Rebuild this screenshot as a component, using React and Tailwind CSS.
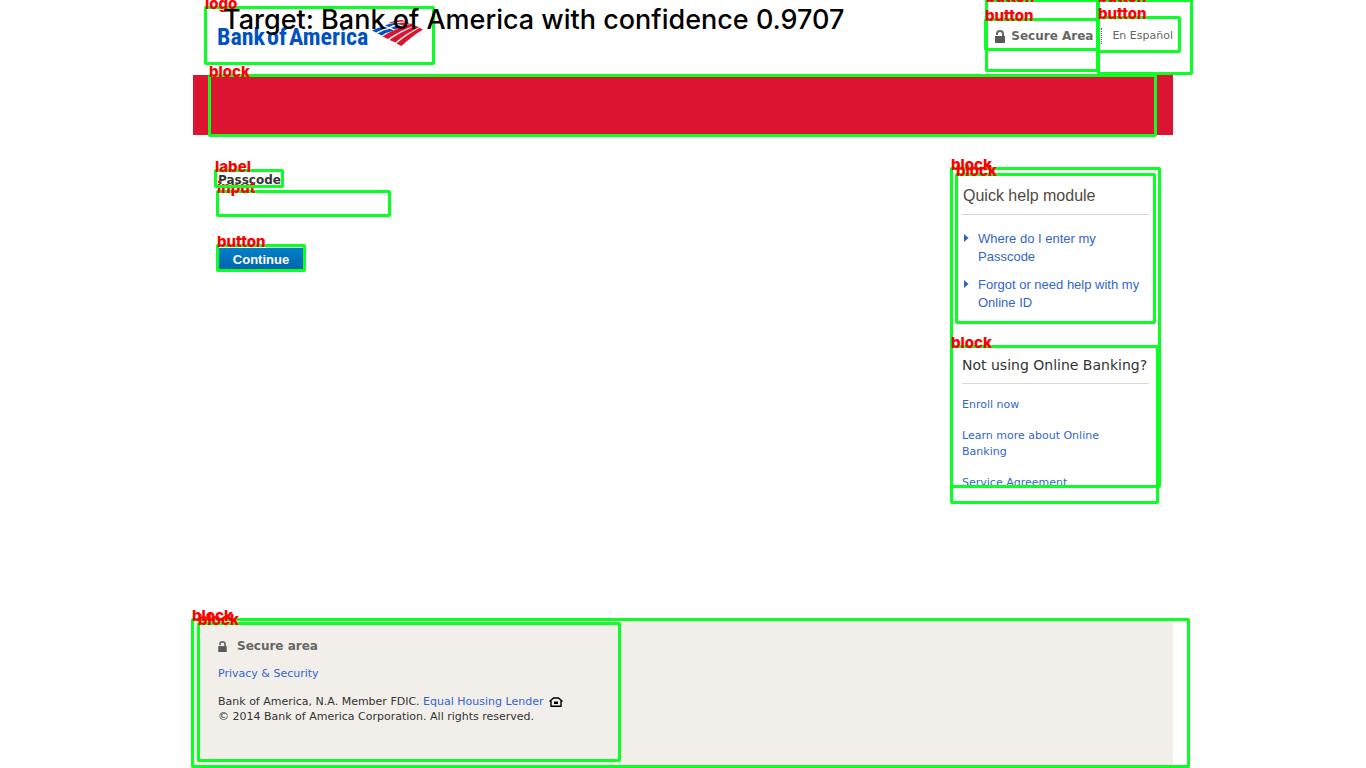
const verdana = "font-['DejaVu_Sans',sans-serif]";
const arial = "font-['Liberation_Sans',sans-serif]";

const marks = [
  { text: 'logo', box: 'left-[11px] top-[6px] w-[231px] h-[59px]' },
  { text: 'block', box: 'left-[15px] top-[74px] w-[949px] h-[63px]' },
  { text: 'button', box: 'left-[792px] top-[-1px] w-[114px] h-[73px]' },
  { text: 'button', box: 'left-[904px] top-[-1px] w-[96px] h-[76px]' },
  { text: 'button', box: 'left-[791px] top-[18px] w-[115px] h-[33px]' },
  { text: 'button', box: 'left-[904px] top-[16px] w-[84px] h-[37px]' },
  { text: 'input', box: 'left-[23px] top-[190px] w-[175px] h-[27px]' },
  { text: 'label', box: 'left-[21px] top-[169px] w-[70px] h-[19px]' },
  { text: 'button', box: 'left-[23px] top-[244px] w-[90px] h-[28px]' },
  { text: 'block', box: 'left-[757px] top-[167px] w-[211px] h-[321px]' },
  { text: 'block', box: 'left-[762px] top-[173px] w-[201px] h-[151px]' },
  { text: 'block', box: 'left-[757px] top-[345px] w-[209px] h-[159px]' },
  { text: 'block', box: 'left-[-2px] top-[618px] w-[999px] h-[150px]' },
  { text: 'block', box: 'left-[4px] top-[622px] w-[424px] h-[140px]' },
];

function Mark({ text, box }) {
  return (
    <div className={`absolute rounded-[2px] border-3 border-[#0cff25] ${box}`}>
      <span className="absolute bottom-full left-[-2px] h-[11px] font-['Inter',sans-serif] text-[15px] leading-[11px] font-extrabold text-[#ff0000]">
        {text}
      </span>
    </div>
  );
}

function Lock({ className }) {
  return (
    <svg className={className} viewBox="0 0 10 13" aria-hidden="true">
      <path d="M2 5V3.6C2 1.900 3.200 1 5 1s3 .9 3 2.600V6" fill="none" stroke="#666" strokeWidth="2" />
      <rect x="0" y="6" width="10" height="7" fill="#5a5a5a" />
    </svg>
  );
}

function Flag() {
  return (
    <svg className="h-[28px] w-[51px]" viewBox="0 0 51 28" aria-hidden="true">
      <g fill="#0052c2">
        <path d="M0 10.500Q6 7.500 12 6.500L16 8Q10 9 4 12.500Z" />
        <path d="M5.500 13.500Q11 10 18 8.800L22 10.500Q15 12 10 15.500Z" />
        <path d="M13 5.500Q17 3.500 22 3L25 4.200Q21 4.800 17 7Z" />
        <path d="M19 7.800Q23 5.800 27 5.200L30.500 6.800Q26 7.800 23 9.500Z" />
      </g>
      <g fill="#dc1431">
        <path d="M16 3.500Q22 .3 30 0L34 1.600Q27 1.600 21 2.700Z" />
        <path d="M24 3.600Q30 2.300 35 2.200L38 3.300Q34 3.900 31 5.600Z" />
        <path d="M10.500 16.500C17 12 25 9 39 3.500L43 5.300C33 9 23 14 16 19Z" />
        <path d="M17.500 20C24 15 34 10 43.500 5.800L47 7.300C38 12 30 16.500 23.500 22.500Z" />
        <path d="M24.500 23.500C31 18 39 12.500 47.500 7.800L51 9.500C43 14 36 20 29.500 26Z" />
      </g>
    </svg>
  );
}

function House() {
  return (
    <svg className="h-[10px] w-[14px]" viewBox="0 0 14 10" aria-hidden="true">
      <path d="M.5 4.500 4.500 1h5l4 3.500M2 4v5.200h10V4" fill="none" stroke="#000" strokeWidth="1.400" />
      <path d="M5 4.500h4v2.500H5z" fill="#000" />
    </svg>
  );
}

function HelpLink({ children }) {
  return (
    <li className="flex gap-[9px]">
      <svg className="mt-1 h-[8px] w-[5px] shrink-0" viewBox="0 0 5 8" aria-hidden="true">
        <path d="M0 0 4.500 4 0 8z" fill="#2a62cc" />
      </svg>
      <a href="#help" className="text-[#3366cc]">{children}</a>
    </li>
  );
}

export default function App() {
  return (
    <div className={`min-h-screen overflow-hidden bg-white text-[11px] text-[#333] ${verdana}`}>
      <div className="relative mx-auto w-full max-w-[980px]">
        <header>
          <div className="flex h-[75px] items-start justify-between pl-6">
            <div className="flex items-start gap-1 pt-5">
              <span className="flex gap-[2px] pt-1 font-['Roboto_Condensed','Liberation_Sans',sans-serif] text-[24px] leading-[26px] font-bold whitespace-nowrap text-[#0052c2]">
                <span>Bank</span> <span>of</span> <span>America</span>
              </span>
              <Flag />
            </div>
            <div className="flex items-center pt-7 leading-4 text-[#666]">
              <Lock className="mr-1.5 h-[13px] w-[10px]" />
              <button type="button" className="text-[12px] font-bold">Secure Area</button>
              <a href="#es" className="ml-2 border-l border-dotted border-[#666] pl-2.5">En Español</a>
            </div>
          </div>
          <div className="h-[60px] bg-[#dc1431]" />
        </header>

        <main className="flex h-[486px] items-start justify-between pr-6 pl-[25px]">
          <form className="flex flex-col items-start pt-[37px]" onSubmit={(e) => e.preventDefault()}>
            <label htmlFor="passcode" className="text-[12px] leading-4 font-bold">Passcode</label>
            <input id="passcode" type="password" className="mt-1 h-6 w-[172px] bg-white px-1 outline-none" />
            <button
              type="submit"
              className={`mt-8 h-6 w-[86px] bg-linear-to-b from-[#0080c8] to-[#0061ab] text-[13px] font-bold text-white ${arial}`}
            >
              Continue
            </button>
          </form>

          <aside className="h-[350px] w-[187px] overflow-hidden">
            <section className={`pt-[49px] ${arial}`}>
              <h2 className="border-b border-[#d8d4d0] pb-1.5 pl-px text-[16px] leading-6 text-[#524940]">Quick help module</h2>
              <ul className="mt-[15px] flex flex-col gap-2.5 pl-0.5 text-[13px] leading-[18px]">
                <HelpLink>Where do I enter my Passcode</HelpLink>
                <HelpLink>Forgot or need help with my Online ID</HelpLink>
              </ul>
            </section>
            <section className="pt-[43px]">
              <h2 className="border-b border-[#e0d8d4] pb-2 text-[14px] leading-5 whitespace-nowrap">Not using Online Banking?</h2>
              <ul className="mt-[13px] flex flex-col gap-[15px] leading-4 text-[#3366cc]">
                <li><a href="#enroll">Enroll now</a></li>
                <li className="w-[160px]"><a href="#learn">Learn more about Online Banking</a></li>
                <li><a href="#service">Service Agreement</a></li>
              </ul>
            </section>
          </aside>
        </main>

        <footer className="h-[144px] bg-[#f2efea] px-[25px] pt-[17px]">
          <p className="flex items-center gap-2.5 text-[12px] leading-4 font-bold text-[#666]">
            <Lock className="h-[11px] w-[9px]" />
            Secure area
          </p>
          <p className="mt-3 leading-4"><a href="#privacy" className="text-[#3366cc]">Privacy &amp; Security</a></p>
          <div className="mt-3 leading-[15px]">
            <p className="flex items-center">
              <span>Bank of America, N.A. Member FDIC. <a href="#lender" className="mr-1.5 text-[#3366cc]">Equal Housing Lender</a></span>
              <House />
            </p>
            <p>© 2014 Bank of America Corporation. All rights reserved.</p>
          </div>
        </footer>

        {marks.map((m, i) => <Mark key={i} {...m} />)}
        <p className="absolute top-[5px] left-[30px] font-['Inter',sans-serif] text-[27px] leading-[30px] font-medium whitespace-nowrap text-black">
          Target: Bank of America with confidence 0.9707
        </p>
      </div>
    </div>
  );
}
